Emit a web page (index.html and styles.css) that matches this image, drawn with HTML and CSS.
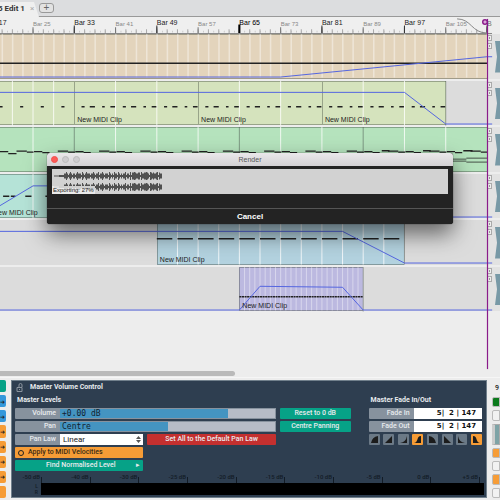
FILE: index.html
```
<!DOCTYPE html>
<html lang="en">
<head>
    <meta charset="UTF-8">
    <meta name="viewport" content="width=device-width, initial-scale=1.0">
    <title>Edit 1</title>
    <link rel="stylesheet" href="styles.css">
</head>
<body>
    <nav class="tabs">
        <a class="tab" href="#edit">5 Edit 1 <span class="tab-close">×</span></a>
        <button class="tab-add" aria-label="New tab">+</button>
    </nav>

    <main class="arranger">
        <div class="ruler">
            <span class="bar first">Bar 17</span>
            <span class="bar minor">Bar 25</span>
            <span class="bar">Bar 33</span>
            <span class="bar minor">Bar 41</span>
            <span class="bar">Bar 49</span>
            <span class="bar minor">Bar 57</span>
            <span class="bar strong">Bar 65</span>
            <span class="bar minor">Bar 73</span>
            <span class="bar">Bar 81</span>
            <span class="bar minor">Bar 89</span>
            <span class="bar">Bar 97</span>
            <span class="bar minor">Bar 105</span>
            <svg class="drawing" viewBox="0 0 944 17" preserveAspectRatio="none">
                <path class="tick" stroke-dasharray="1 9" stroke-dashoffset="-4" d="M0 15.500H944" stroke-width="2"/>
                <path class="tick" stroke-dasharray="2 18" stroke-dashoffset="-3" d="M0 15H944" stroke-width="4"/>
                <path class="tick mid" stroke-dasharray="2 78" d="M63 14H944" stroke-width="6"/>
                <path class="tick major" stroke-dasharray="2 158" d="M143 13H944" stroke-width="8"/>
                <path class="tick strong" d="M462 12.500H466" stroke-width="9"/>
                <path class="fade line" d="M886 2C914 2 914 17 944 17"/>
            </svg>
        </div>
        <div class="ruler-end">Ba</div>

        <section class="lane">
            <div class="clip tan to-end"></div>
            <svg class="drawing" viewBox="0 0 944 45" preserveAspectRatio="none">
                <path class="stripe" stroke-dasharray="3 17" d="M3 22H944"/>
                <path class="note" d="M0 29.500H944" stroke-width="1.500"/>
                <path class="curve" d="M0 43.500H544L944 23H954"/>
            </svg>
        </section>
        <div class="head"><i></i><i></i><b></b></div>

        <section class="lane">
            <div class="clip green from-start"></div>
            <div class="clip green bar33"><span>New MIDI Clip</span></div>
            <div class="clip green bar57"><span>New MIDI Clip</span></div>
            <div class="clip green bar81"><span>New MIDI Clip</span></div>
            <svg class="drawing" viewBox="0 0 944 45" preserveAspectRatio="none">
                <path class="white line" d="M24 0V45M64 0V45M104 0V45M224 0V45M304 0V45M464 0V45M544 0V45M704 0V45M784 0V45"/>
                <path class="edge line" d="M864 0V45"/>
                <path class="note" stroke-dasharray="6 34" d="M-1 26H144" stroke-width="1.500"/>
                <path class="note" stroke-dasharray="6 10 10 14 5 11 9 15" d="M158 26H864" stroke-width="1.500"/>
                <path class="curve" d="M0 11.500H784L864 43.500H954"/>
            </svg>
        </section>
        <div class="head"><i></i><i></i><b></b></div>

        <section class="lane">
            <div class="clip mint to-end"></div>
            <svg class="drawing" viewBox="0 0 944 45" preserveAspectRatio="none">
                <path class="white line" d="M64 0V45M224 0V45M304 0V45M384 0V45M544 0V45M624 0V45M784 0V45M864 0V45"/>
                <path class="edge line" d="M144 0V45M464 0V45M704 0V45"/>
                <path class="note" stroke-dasharray="20 60" d="M32 24.500H944" stroke-width="1.300"/>
                <path class="note" stroke-dasharray="13 67" d="M52 25.500H944" stroke-width="1.300"/>
                <path class="note" stroke-dasharray="16 64" d="M66 25H944" stroke-width="1.300"/>
                <path class="note" stroke-dasharray="14 66" d="M82 26H944" stroke-width="1.300"/>
                <path class="note" d="M0 25H16M16 27H32M740 24H755M820 24H835M898 24H916" stroke-width="1.300"/>
                <path class="note" d="M870 32.500H904M904 31.500H944M870 34.500H904M904 35.500H944" stroke-width="1"/>
            </svg>
        </section>
        <div class="head"><i></i><i></i><b></b></div>

        <section class="lane">
            <div class="clip teal from-start"><span>New MIDI Clip</span></div>
            <svg class="drawing" viewBox="0 0 944 45" preserveAspectRatio="none">
                <path class="white line" d="M64 0V45"/>
                <path class="note" d="M6 22.500H18M21 22.500H30M49 22.500H61M88 22.500H100" stroke-width="1.500"/>
                <path class="curve" d="M0 32L64 12H704L864 43.500H954"/>
            </svg>
        </section>
        <div class="head"><i></i><i></i><b></b></div>

        <section class="lane">
            <div class="clip blue bar49"><span>New MIDI Clip</span></div>
            <svg class="drawing" viewBox="0 0 944 45" preserveAspectRatio="none">
                <path class="white line" d="M344 0V45M384 0V45M424 0V45M464 0V45M504 0V45M544 0V45M584 0V45M624 0V45M664 0V45M704 0V45M744 0V45"/>
                <path class="edge line" d="M784 0V45"/>
                <path class="note" stroke-dasharray="30 10" d="M304 19H784" stroke-width="1.500"/>
                <path class="curve" d="M0 11.500H664L784 43.500H954"/>
            </svg>
        </section>
        <div class="head"><i></i><i></i><b></b></div>

        <section class="lane">
            <div class="clip violet bar65"><span>New MIDI Clip</span></div>
            <svg class="drawing" viewBox="0 0 944 45" preserveAspectRatio="none">
                <path class="stripe" stroke-dasharray="2 8" d="M473 22H704"/>
                <path class="edge line" d="M704 0V45"/>
                <path class="note" stroke-dasharray="4 1" d="M464 30H704" stroke-width="1.500"/>
                <path class="curve" d="M0 43.500H464L504 19.500L664 20.500L704 43.500H954"/>
            </svg>
        </section>
        <div class="head"><i></i><i></i><b></b></div>

        <div class="playhead"></div>
    </main>
    <div class="scrollbar"><div class="scroll-thumb"></div></div>

    <footer class="bottom">
        <div class="strip left">
            <button class="go"></button>
            <button class="info">➜</button>
            <button class="info">➜</button>
            <button class="warn">➜</button>
            <button class="warn">➜</button>
            <button class="warn">➜</button>
            <button class="warn">➜</button>
            <button class="warn"></button>
        </div>

        <section class="panel">
            <h1>
                <svg width="7" height="9" viewBox="0 0 7 9"><path d="M1 4.500H6V8.500H1ZM3 4V2Q3 .5 4.500 .5T6 2V4M3.500 6V7" fill="none" stroke="#8b949e"/></svg>
                Master Volume Control
            </h1>
            <div class="controls">
                <div class="levels">
                    <h2>Master Levels</h2>
                    <div class="field">
                        <label for="volume">Volume</label>
                        <div class="slider">
                            <input type="range" id="volume" value="78" style="--fill: 78%">
                            <output for="volume">+0.00 dB</output>
                        </div>
                    </div>
                    <div class="field">
                        <label for="pan">Pan</label>
                        <div class="slider">
                            <input type="range" id="pan" value="50" style="--fill: 50%">
                            <output for="pan">Centre</output>
                        </div>
                    </div>
                    <div class="pair">
                        <div class="field">
                            <label for="law">Pan Law</label>
                            <div class="picker">
                                <select id="law"><option>Linear</option></select>
                                <svg width="5" height="7" viewBox="0 0 5 7"><path d="M0 3L2.500 0L5 3ZM0 4L2.500 7L5 4Z" fill="#555"/></svg>
                            </div>
                        </div>
                        <button class="danger">Set All to the Default Pan Law</button>
                        <label class="check"><input type="checkbox">Apply to MIDI Velocities</label>
                        <button class="go normalise">Find Normalised Level<span>▸</span></button>
                    </div>
                </div>
                <div class="resets">
                    <button class="go">Reset to 0 dB</button>
                    <button class="go">Centre Panning</button>
                </div>
                <div class="fades">
                    <h2>Master Fade In/Out</h2>
                    <div class="field">
                        <label for="fadeIn">Fade In</label>
                        <input type="text" id="fadeIn" value="5|  2 | 147">
                    </div>
                    <div class="field">
                        <label for="fadeOut">Fade Out</label>
                        <input type="text" id="fadeOut" value="5|  2 | 147">
                    </div>
                    <div class="shapes">
                        <button aria-label="Fade in convex"><svg viewBox="0 0 11 11"><path d="M2 9Q3 3 9 2V9Z"/></svg></button>
                        <button aria-label="Fade in linear"><svg viewBox="0 0 11 11"><path d="M2 9L9 2V9Z"/></svg></button>
                        <button aria-label="Fade in concave"><svg viewBox="0 0 11 11"><path d="M2 9Q8 8 9 2V9Z"/></svg></button>
                        <button class="on" aria-label="Fade in curve"><svg viewBox="0 0 11 11"><path d="M2 9C7 8 4 2 9 2V9Z"/></svg></button>
                        <button aria-label="Fade out convex"><svg viewBox="0 0 11 11"><path d="M9 9Q8 3 2 2V9Z"/></svg></button>
                        <button aria-label="Fade out linear"><svg viewBox="0 0 11 11"><path d="M9 9L2 2V9Z"/></svg></button>
                        <button aria-label="Fade out concave"><svg viewBox="0 0 11 11"><path d="M9 9Q3 8 2 2V9Z"/></svg></button>
                        <button class="on" aria-label="Fade out curve"><svg viewBox="0 0 11 11"><path d="M9 9C4 8 7 2 2 2V9Z"/></svg></button>
                    </div>
                </div>
            </div>
            <div class="scale">
                <span>-50 dB</span><span>-40 dB</span><span>-30 dB</span><span>-25 dB</span><span>-20 dB</span>
                <span>-15 dB</span><span>-10 dB</span><span>-5 dB</span><span>0 dB</span><span>+5 dB</span>
            </div>
            <div class="meter">
                <div class="channels"><span>L</span><span>R</span></div>
                <div class="meter-bar"></div>
            </div>
        </section>

        <div class="strip right">
            <span>9</span>
            <button class="dark"></button>
            <button class="plain"></button>
            <div class="plugin"></div>
            <button class="warn"></button>
            <button class="plain"></button>
            <button class="warn"></button>
            <button class="plain"></button>
        </div>
    </footer>

    <div class="dialog" role="dialog" aria-labelledby="dialogTitle">
        <header>
            <div class="lights"><i class="close"></i><i></i><i></i></div>
            <span id="dialogTitle">Render</span>
        </header>
        <div class="progress">
            <svg viewBox="0 0 396 25" preserveAspectRatio="xMinYMin meet">
                <g id="wave" stroke="#505050" fill="none">
                    <path d="M2 7H110" stroke-width="1"/>
                    <path d="M7 7H110" stroke-width="2"/>
                    <path d="M12 7H110" stroke-width="5" stroke-dasharray="2 1 1 1 3 1"/>
                    <path d="M14 7H110" stroke-width="8" stroke-dasharray="1 3 1 6 1 4"/>
                    <path d="M80 7H110" stroke-width="7" stroke-dasharray="2 1 1 2"/>
                </g>
                <use href="#wave" y="11"/>
            </svg>
            <span class="status">Exporting: 27%</span>
        </div>
        <button class="cancel">Cancel</button>
    </div>
</body>
</html>
```
FILE: styles.css
```
* {
    box-sizing: border-box;
}
body {
    margin: 0;
    position: relative;
    min-height: 100vh;
    overflow: hidden;
    background-color: #ededed;
    color: #222;
    font-family: "Liberation Sans", Arial, sans-serif;
    font-size: 7px;
    line-height: 9px;
}
h1, h2 {
    margin: 0;
    font-size: 7px;
    line-height: 9px;
}
button, input, select {
    margin: 0;
    padding: 0;
    border: 0;
    font: inherit;
    color: inherit;
}

/* tabs */
.tabs {
    display: flex;
    align-items: center;
    height: 17px;
    background-color: #dcdddf;
    border-bottom: 1px solid #999;
}
.tab {
    display: flex;
    gap: 5px;
    align-self: flex-end;
    width: 39px;
    height: 15px;
    margin-bottom: -1px;
    background-color: #efefef;
    clip-path: polygon(0 0, 34px 0, 39px 100%, 0 100%);
    color: #333;
    font-family: Roboto, sans-serif;
    font-weight: bold;
    font-size: 8px;
    line-height: 14px;
    white-space: nowrap;
    text-decoration: none;
    text-indent: -2px;
}
.tab-close {
    color: #aaa;
    text-indent: 0;
    font-weight: normal;
}
.tab-add {
    width: 15px;
    height: 10px;
    background-color: #e2e2e2;
    border: 1px solid #999;
    border-radius: 3px;
    color: #666;
    font-size: 10px;
    line-height: 8px;
}

/* arranger: one unit of the time grid is 8/5 bars */
.arranger {
    position: relative;
    display: grid;
    grid-template-columns: 1fr 13px;
    grid-template-rows: 17px repeat(6, 1fr);
    height: 296px;
}
.ruler, .lane {
    position: relative;
    display: grid;
    grid-template-columns: 4fr repeat(11, 5fr);
    min-width: 0;
}
.ruler {
    background-color: #efefef;
    border-bottom: 1px solid #888;
}
.ruler-end {
    width: 5px;
    overflow: hidden;
    padding-top: 2px;
    color: #777;
    border-bottom: 1px solid #888;
}
.bar {
    min-width: 0;
    padding-top: 1px;
    white-space: nowrap;
}
.bar.first {
    margin-left: -14px;
}
.bar.minor {
    padding-top: 3px;
    color: #888;
    font-size: 6px;
}
.bar.strong {
    color: #000;
    -webkit-text-stroke: 0;
}
.drawing {
    position: absolute;
    inset: 0;
    width: 100%;
    height: 100%;
    overflow: visible;
    fill: none;
}
.line, .curve {
    vector-effect: non-scaling-stroke;
}
.tick { stroke: #aaa; }
.tick.mid { stroke: #777; }
.tick.major { stroke: #333; }
.tick.strong { stroke: #000; }
.fade { stroke: #888; }
.stripe {
    stroke: #fff;
    stroke-opacity: .4;
    stroke-width: 44;
}
.white {
    stroke: #fff;
    stroke-opacity: .8;
}
.edge {
    stroke: #46504b;
    stroke-opacity: .5;
}
.note { stroke: #222; }
.curve { stroke: #5566e0; }

.lane, .head {
    margin-bottom: 2px;
}
.lane {
    background-color: #dcdcdc;
}
.clip {
    grid-row: 1;
    display: flex;
    align-items: flex-end;
    min-width: 0;
    padding: 0 2px;
    border: 1px solid rgba(60, 70, 60, .4);
    border-right-width: 0;
    white-space: nowrap;
}
.clip span {
    position: relative;
    z-index: 1;
}
.tan { background-color: #e3d4bc; }
.green { background-color: #d5e3bd; }
.mint { background-color: #b5e3bd; }
.teal { background-color: #b5e3d7; }
.blue { background-color: #b3d2df; }
.violet { background-color: #bcb9e0; }
.to-end {
    grid-column: 1 / -1;
    border-left-width: 0;
}
.from-start {
    grid-column: 1 / 3;
    border-left-width: 0;
}
.bar33 { grid-column: 3 / 6; }
.bar49 { grid-column: 5 / 11; }
.bar57 { grid-column: 6 / 9; }
.bar65 { grid-column: 7 / 10; }
.bar81 { grid-column: 9 / 12; }
.teal {
    margin-left: -9px;
}

.head {
    display: grid;
    grid-template-columns: 5px 1fr;
    grid-template-rows: 6px 6px 1fr;
    gap: 2px 3px;
    padding-top: 1px;
    background-color: #e2e2e2;
}
.head i {
    grid-column: 1;
    border: 1px solid #aaa;
    background: linear-gradient(#999, #999) center / 1px 2px no-repeat #eee;
}
.head b {
    grid-column: 2;
    grid-row: 1 / 4;
    margin: 6px 0;
    background-color: #7899a6;
    clip-path: polygon(0 0, 100% 0, 100% 100%, 0 100%, 2px 50%);
}
.playhead {
    position: absolute;
    z-index: 2;
    top: 2px;
    right: 12px;
    width: 1px;
    height: 350px;
    background-color: #8a1b8a;
    box-shadow: 0 0 1px #8a1b8a;
}
.playhead::before {
    content: "";
    position: absolute;
    top: 0;
    right: 0;
    width: 6px;
    height: 6px;
    border-radius: 50%;
    background: radial-gradient(#d9a8d9 1px, #8a1b8a 2px);
}

.scrollbar {
    margin-top: 58px;
    height: 7px;
    border-bottom: 1px solid #f6f6f6;
}
.scroll-thumb {
    width: 47%;
    height: 5px;
    border-radius: 0 3px 3px 0;
    background-color: #bababa;
}

/* bottom area */
.bottom {
    display: grid;
    grid-template-columns: 6px 1fr 8px;
    column-gap: 5px;
    height: 118px;
    margin-top: 2px;
    font-family: Roboto, "Noto Sans", sans-serif;
    font-weight: 500;
}
.strip {
    display: flex;
    flex-direction: column;
    gap: 3px;
    overflow: hidden;
}
.strip button {
    flex: 1;
    border-radius: 0 2px 2px 0;
    color: #222;
    text-align: left;
    font-size: 6px;
}
.right button {
    border: 1px solid #bbb;
    border-radius: 2px 0 0 2px;
}
.right span {
    height: 14px;
    padding: 4px 3px 0;
}
.plugin {
    height: 21px;
    border: 1px solid #aaa;
    border-left: 3px solid #ccc;
    background-color: #7ea3a6;
}
.go { background-color: #06a287; }
.info { background-color: #3498db; }
.warn { background-color: #f69c36; }
.strip .dark { background-color: #0b7a1c; }
.plain { background-color: #f2f2f2; }

.panel {
    display: flex;
    flex-direction: column;
    min-width: 0;
    padding: 2px 2px 2px 0;
    background-color: #2e3e50;
    border: 1px solid #71808c;
    color: #e8ebee;
}
.panel h1, .panel h2 {
    font-weight: bold;
}
.panel h1 {
    display: flex;
    gap: 7px;
    padding-left: 4px;
}
.controls {
    display: grid;
    grid-template-columns: 262fr 71fr 128fr;
    column-gap: 4px;
    margin: 4px 2px 0 3px;
}
.levels, .fades, .resets {
    display: flex;
    flex-direction: column;
    gap: 2px;
    min-width: 0;
}
.fades {
    margin-left: 14px;
}
.controls h2 {
    height: 10px;
    padding-left: 2px;
}
.resets {
    padding-top: 12px;
}
.controls button, .field, .check {
    height: 11px;
    border-radius: 1px;
    line-height: 11px;
    text-align: center;
    white-space: nowrap;
}
.field {
    display: grid;
    grid-template-columns: 45px 1fr;
    background-color: #87929e;
}
.field label {
    padding-right: 4px;
    text-align: right;
}
.slider {
    position: relative;
    display: flex;
}
.slider input {
    appearance: none;
    width: 100%;
    height: 11px;
    border: 1px solid #87929e;
    border-left: 0;
    background: linear-gradient(to right, #4494c1 var(--fill), #b6bcc7 var(--fill));
}
.slider input::-webkit-slider-thumb {
    appearance: none;
    width: 1px;
    height: 9px;
    background-color: transparent;
}
.slider output {
    position: absolute;
    left: 2px;
    top: 0;
    color: #122230;
    font-family: "DejaVu Sans Mono", monospace;
    font-size: 8px;
    font-weight: normal;
    line-height: 11px;
    pointer-events: none;
}
.pair {
    display: grid;
    grid-template-columns: 1fr 1fr;
    gap: 2px 4px;
}
.pair .check, .pair .normalise {
    grid-column: 1;
}
.picker {
    position: relative;
    display: flex;
}
.picker select {
    appearance: none;
    width: 100%;
    height: 11px;
    padding-left: 3px;
    background-color: #fff;
    color: #222;
    font-size: 8px;
    font-weight: normal;
    line-height: 11px;
}
.picker svg {
    position: absolute;
    right: 2px;
    top: 2px;
}
.danger {
    background-color: #c4302f;
}
.check {
    display: flex;
    align-items: center;
    gap: 4px;
    padding-left: 3px;
    background-color: #f69c36;
    color: #3a2a14;
}
.check input {
    appearance: none;
    width: 6px;
    height: 6px;
    border: 1px solid #222;
    border-radius: 3px;
}
.normalise {
    display: flex;
    justify-content: center;
    padding-left: 31px;
}
.normalise span {
    margin: 0 3px 0 auto;
}
.fades input {
    min-width: 0;
    width: 100%;
    padding-right: 6px;
    background-color: #fff;
    color: #111;
    font-family: "DejaVu Sans", sans-serif;
    font-size: 7px;
    font-weight: bold;
    text-align: right;
    white-space: pre;
}
.shapes {
    display: flex;
    justify-content: space-between;
}
.shapes button {
    width: 11px;
    background-color: #6b7986;
}
.shapes .on {
    background-color: #f69c36;
}
.shapes svg {
    display: block;
    fill: #1c1c1c;
}
.scale {
    display: grid;
    grid-template-columns: 30px repeat(9, 1fr);
    margin: auto 4px 0 0;
    color: #131c26;
    font-size: 6px;
    line-height: 8px;
    text-align: right;
}
.scale span {
    height: 10px;
    padding-right: 2px;
    background: linear-gradient(#131c26, #131c26) right bottom / 1px 6px no-repeat;
}
.meter {
    display: grid;
    grid-template-columns: 29px 1fr;
    height: 12px;
}
.channels {
    display: flex;
    flex-direction: column;
    padding-right: 3px;
    color: #131c26;
    font-size: 5px;
    line-height: 6px;
    text-align: right;
}
.meter-bar {
    background-color: #000;
}

/* render dialog */
.dialog {
    position: absolute;
    z-index: 3;
    top: 153px;
    left: 47px;
    right: 47px;
    overflow: hidden;
    border-radius: 3px;
    background-color: #232323;
    box-shadow: 0 10px 22px rgba(0, 0, 0, .55), 0 0 1px #000;
}
.dialog header {
    display: grid;
    grid-template-columns: 1fr auto 1fr;
    align-items: center;
    height: 13px;
    padding: 0 4px;
    background: linear-gradient(#eae8ea, #d3d1d4);
    color: #555;
}
.lights {
    display: flex;
    gap: 4px;
}
.lights i {
    width: 7px;
    height: 7px;
    border: 1px solid #bbb;
    border-radius: 4px;
    background-color: #cecccf;
}
.lights .close {
    border-color: #f0504d;
    background-color: #fc5b57;
}
.progress {
    position: relative;
    height: 25px;
    margin: 3px 5px 14px;
    background-color: #d2d2d2;
}
.progress svg {
    display: block;
    width: 396px;
    height: 25px;
}
.status {
    position: absolute;
    left: 0;
    bottom: 0;
    padding: 0 1px;
    background-color: rgba(240, 240, 240, .8);
    font-size: 6px;
    line-height: 8px;
}
.cancel {
    display: block;
    width: 100%;
    height: 16px;
    background-color: #232323;
    border-top: 1px solid #555;
    color: #fff;
    font-size: 8px;
    font-weight: bold;
}
```
